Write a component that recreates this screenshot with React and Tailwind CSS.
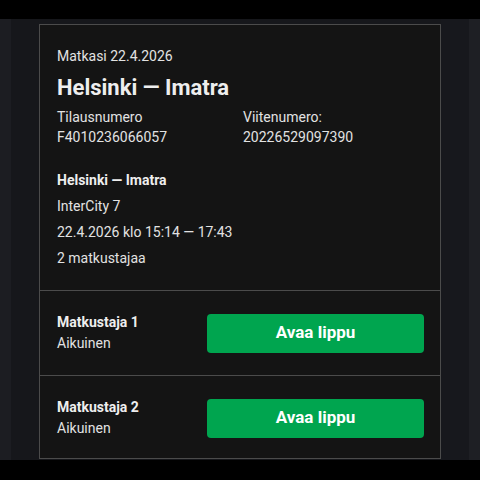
import React from 'react';

const passengers = [
  { id: 1, name: 'Matkustaja 1', type: 'Aikuinen' },
  { id: 2, name: 'Matkustaja 2', type: 'Aikuinen' },
];

const App = () => {
  return (
    <div className="w-[480px] h-[480px] bg-black flex flex-col overflow-hidden font-['Roboto',sans-serif] text-[#e2e2e2]">
      <div className="h-[19px] shrink-0 bg-black" />
      <div className="h-[441px] flex">
        <div className="w-[11px] bg-[#1c1d22]" />
        <div className="w-[28px] bg-[#16171b]" />
        <div className="flex-1 pt-[5px] pb-[1px] bg-[#16171b]">
          <div className="h-full border border-[#4b4b4b] bg-[#141414] flex flex-col overflow-hidden">
            <div className="px-[17px] pt-[21px] pb-[22px] border-b border-[#4b4b4b]">
              <div className="text-[14px] leading-[20px]">Matkasi 22.4.2026</div>
              <div className="mt-[8px] text-[22px] leading-[28px] font-bold text-[#eeeeee]">Helsinki — Imatra</div>
              <div className="mt-[5px] grid grid-cols-[186px_1fr] text-[14px] leading-[20px]">
                <div>
                  <div>Tilausnumero</div>
                  <div>F4010236066057</div>
                </div>
                <div>
                  <div>Viitenumero:</div>
                  <div>20226529097390</div>
                </div>
              </div>
              <div className="mt-[23px] text-[14px] leading-[20px] font-bold text-[#eeeeee]">Helsinki — Imatra</div>
              <div className="mt-[6px] text-[14px] leading-[20px]">InterCity 7</div>
              <div className="mt-[6px] text-[14px] leading-[20px]">22.4.2026 klo 15:14 — 17:43</div>
              <div className="mt-[6px] text-[14px] leading-[20px]">2 matkustajaa</div>
            </div>
            {passengers.map((p, i) => (
              <div
                key={p.id}
                className={
                  i === 0
                    ? 'flex shrink-0 items-center justify-between pl-[17px] pr-[16px] py-[21px] border-b border-[#4b4b4b]'
                    : 'flex shrink-0 items-center justify-between pl-[17px] pr-[16px] py-[21px]'
                }
              >
                <div className="text-[14px] leading-[21px]">
                  <div className="font-bold text-[#eeeeee]">{p.name}</div>
                  <div>{p.type}</div>
                </div>
                <button className="w-[217px] h-[39px] rounded-[4px] bg-[#00a54f] text-white text-[17px] font-bold">
                  Avaa lippu
                </button>
              </div>
            ))}
          </div>
        </div>
        <div className="w-[28px] bg-[#17181d]" />
        <div className="w-[11px] bg-[#1e1f24]" />
      </div>
      <div className="flex-1 bg-black" />
    </div>
  );
};

export default App;
